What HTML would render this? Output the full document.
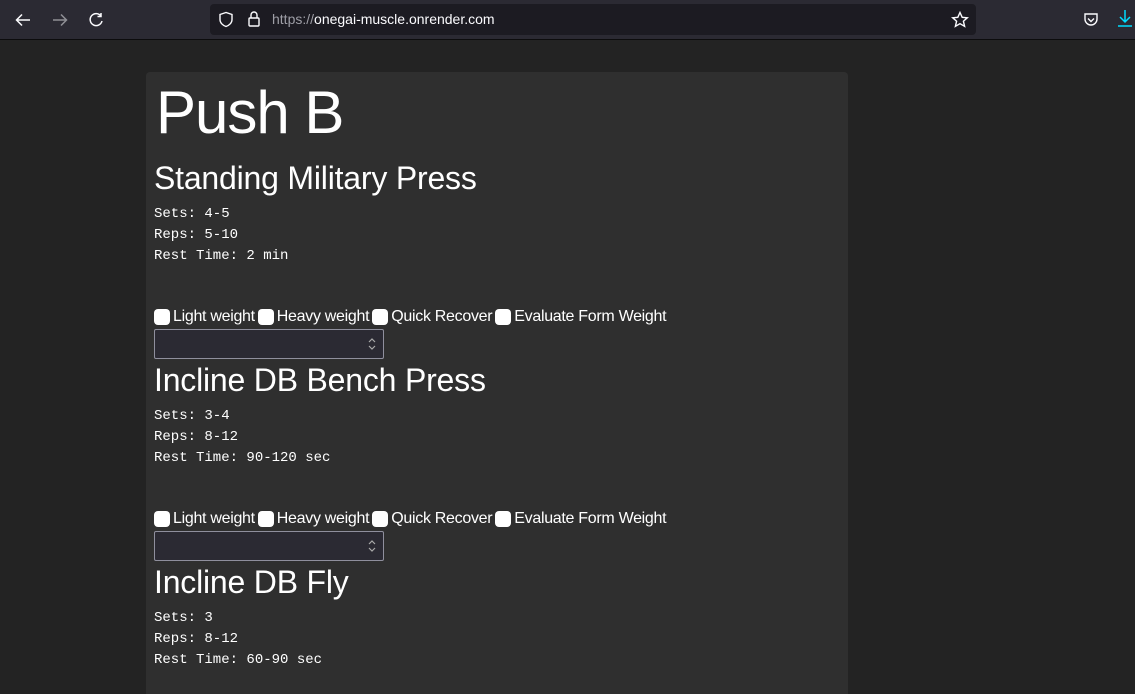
<!DOCTYPE html>
<html><head><meta charset="utf-8"><style>
*{box-sizing:border-box}
html,body{height:694px}
body{margin:0;width:1135px;overflow:hidden;background:#232323;font-family:"Liberation Sans",sans-serif;color:#fff}
.bar{height:40px;background:#2b2a33;border-bottom:1px solid #0c0c0d;position:relative}
.url{position:absolute;left:210px;top:4px;width:766px;height:31px;background:#1c1b22;border-radius:4px}
.url span{position:absolute;left:62px;top:7px;font-size:14px;color:#fbfbfe}
.url span b{font-weight:normal;color:#9e9ea6}
.ic{position:absolute;}
.card{position:absolute;left:146px;top:72px;width:702px;height:622px;background:#2f2f2f;border-radius:4px 4px 0 0;padding:0 8px}
h1{font-weight:normal;font-size:60px;margin:0;position:absolute;left:10px;top:6px;letter-spacing:-1px}
.ex{position:absolute;left:8px}
h2{font-weight:normal;font-size:32px;margin:0;letter-spacing:-0.2px;line-height:40px}
.m{font-family:"Liberation Mono",monospace;font-size:14px;line-height:21px;margin-top:6px}
.cb{margin-top:40px;font-size:16px;line-height:20px;display:flex;align-items:center;letter-spacing:-0.3px}
.cb i{display:inline-block;width:16px;height:16px;background:#fff;border-radius:4px;margin:0 3px 0 0}
.cb em{font-style:normal;margin-right:3px}
.sel{width:230px;height:30px;background:#2b2a33;border:1px solid #8f8f9d;border-radius:2px;margin-top:2px;position:relative}
</style></head><body>
<div class="bar">
<svg class="ic" style="left:14px;top:11px" width="18" height="18" viewBox="0 0 18 18" fill="none" stroke="#fbfbfe" stroke-width="1.5"><path d="M16 9H3M8 3.5 2.5 9 8 14.5"/></svg>
<svg class="ic" style="left:51px;top:11px" width="18" height="18" viewBox="0 0 18 18" fill="none" stroke="#8f8f95" stroke-width="1.5"><path d="M2 9h13M10 3.5 15.5 9 10 14.5"/></svg>
<svg class="ic" style="left:87px;top:11px" width="18" height="18" viewBox="0 0 18 18" fill="none" stroke="#fbfbfe" stroke-width="1.5"><path d="M14 5A6 6 0 1 0 15 10M14 2v3.5h-3.5"/></svg>
<div class="url">
<svg class="ic" style="left:8px;top:7px" width="16" height="17" viewBox="0 0 16 17" fill="none" stroke="#fbfbfe" stroke-width="1.4"><path d="M8 1.5 2 3.5v5c0 3.5 3 6 6 7 3-1 6-3.5 6-7v-5z"/></svg>
<svg class="ic" style="left:37px;top:6px" width="14" height="18" viewBox="0 0 14 18" fill="none" stroke="#fbfbfe" stroke-width="1.4"><rect x="2" y="8" width="10" height="8" rx="1"/><path d="M4 8V5a3 3 0 0 1 6 0v3"/></svg>
<span><b>https://</b>onegai-muscle.onrender.com</span>
<svg class="ic" style="left:741px;top:7px" width="18" height="18" viewBox="0 0 18 18" fill="none" stroke="#fbfbfe" stroke-width="1.4"><path d="M9 1.5l2.2 4.8 5.1.5-3.9 3.4 1.2 5.1L9 12.7l-4.6 2.6 1.2-5.1L1.7 6.8l5.1-.5z"/></svg>
</div>
<svg class="ic" style="left:1082px;top:11px" width="18" height="18" viewBox="0 0 18 18" fill="none" stroke="#fbfbfe" stroke-width="1.4"><path d="M3 3h12v5a6 6 0 0 1-12 0zM6 7.5l3 3 3-3"/></svg>
<svg class="ic" style="left:1116px;top:9px" width="18" height="20" viewBox="0 0 18 20" fill="none" stroke="#00ddff" stroke-width="1.5"><path d="M9 1v12M4 8l5 5 5-5M2 17h14"/></svg>
</div>
<div class="card">
<h1>Push B</h1>
<div class="ex" style="top:86px">
<h2>Standing Military Press</h2>
<div class="m">Sets: 4-5<br>Reps: 5-10<br>Rest Time: 2 min</div>
<div class="cb"><i></i><em>Light weight</em><i></i><em>Heavy weight</em><i></i><em>Quick Recover</em><i></i><em>Evaluate Form Weight</em></div>
<div class="sel"><svg style="position:absolute;right:6px;top:6px" width="10" height="16" viewBox="0 0 10 16" fill="none" stroke="#aaa" stroke-width="1.2"><path d="M2 6l3-3 3 3M2 10l3 3 3-3"/></svg></div>
</div>
<div class="ex" style="top:288px">
<h2>Incline DB Bench Press</h2>
<div class="m">Sets: 3-4<br>Reps: 8-12<br>Rest Time: 90-120 sec</div>
<div class="cb"><i></i><em>Light weight</em><i></i><em>Heavy weight</em><i></i><em>Quick Recover</em><i></i><em>Evaluate Form Weight</em></div>
<div class="sel"><svg style="position:absolute;right:6px;top:6px" width="10" height="16" viewBox="0 0 10 16" fill="none" stroke="#aaa" stroke-width="1.2"><path d="M2 6l3-3 3 3M2 10l3 3 3-3"/></svg></div>
</div>
<div class="ex" style="top:490px">
<h2>Incline DB Fly</h2>
<div class="m">Sets: 3<br>Reps: 8-12<br>Rest Time: 60-90 sec</div>
</div>
</div>
</body></html>
